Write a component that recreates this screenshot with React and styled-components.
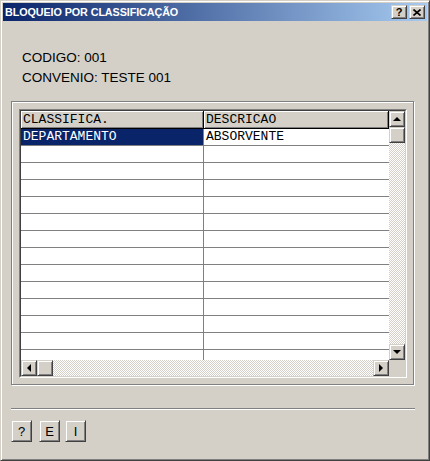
import React from 'react';
import styled, { createGlobalStyle, css } from 'styled-components';

const GlobalStyle = createGlobalStyle`
  body {
    margin: 0;
    background: #d4d0c8;
    font-family: "Liberation Sans", Arial, sans-serif;
  }
`;

// classic win2000 raised bevel
const raised = css`
  box-sizing: border-box;
  background: #d4d0c8;
  border: 1px solid;
  border-color: #d4d0c8 #404040 #404040 #d4d0c8;
  box-shadow: inset 1px 1px #fff, inset -1px -1px #808080;
`;

const Window = styled.div`
  box-sizing: border-box;
  width: 430px;
  height: 461px;
  padding: 2px;
  border: 1px solid;
  border-color: #d4d0c8 #404040 #404040 #d4d0c8;
  box-shadow: inset 1px 1px #fff, inset -1px -1px #808080;
  background: #d4d0c8;
  display: flex;
  flex-direction: column;
`;

const TitleBar = styled.div`
  height: 18px;
  display: flex;
  align-items: center;
  padding: 0 2px;
  background: linear-gradient(to right, #0a246a, #a6caf0);
`;

const Title = styled.div`
  flex: 1;
  color: #fff;
  font-weight: bold;
  font-size: 10.8px;
  letter-spacing: -0.1px;
`;

const TitleButton = styled.div`
  ${raised};
  width: 16px;
  height: 14px;
  margin-left: ${p => p.$gap || 0}px;
  display: flex;
  align-items: center;
  justify-content: center;
  font-weight: bold;
  font-size: 11px;
  color: #000;
  line-height: 1;
`;

const Body = styled.div`
  flex: 1;
  display: flex;
  flex-direction: column;
`;

const Labels = styled.div`
  margin-top: 27px;
  padding-left: 19px;
`;

const Label = styled.div`
  height: 20px;
  line-height: 20px;
  font-size: 13.5px;
  color: #000;
`;

const GroupBox = styled.div`
  box-sizing: border-box;
  margin: 13px 0 0 8px;
  width: 403px;
  height: 284px;
  padding: 7px 6px 6px 7px;
  border: 1px solid #808080;
  box-shadow: inset 1px 1px #fff, 1px 1px #fff;
`;

const GridFrame = styled.div`
  box-sizing: border-box;
  width: 388px;
  height: 269px;
  border: 1px solid;
  border-color: #808080 #fff #fff #808080;
`;

const GridInner = styled.div`
  box-sizing: border-box;
  height: 100%;
  border: 1px solid;
  border-color: #404040 #d4d0c8 #d4d0c8 #404040;
  display: grid;
  grid-template-columns: 1fr 16px;
  grid-template-rows: 1fr 16px;
`;

const DataArea = styled.div`
  background: #fff;
  overflow: hidden;
  font-family: "Liberation Mono", "Courier New", monospace;
  font-size: 13px;
`;

const Row = styled.div`
  display: flex;
  height: ${p => (p.$header ? 18 : 17)}px;
`;

const HeadCell = styled.div`
  box-sizing: border-box;
  ${p => (p.$w ? `width: ${p.$w}px;` : 'flex: 1;')}
  background: #d4d0c8;
  border-right: 1px solid #000;
  border-bottom: 1px solid #000;
  box-shadow: inset 1px 1px #fff, inset -1px -1px #808080;
  padding-left: 2px;
  line-height: 17px;
  color: #000;
  white-space: nowrap;
`;

const Cell = styled.div`
  box-sizing: border-box;
  ${p => (p.$w ? `width: ${p.$w}px;` : 'flex: 1;')}
  border-bottom: 1px solid #808080;
  border-right: ${p => (p.$w ? '1px solid #808080' : 'none')};
  background: ${p => (p.$selected ? '#0a246a' : '#fff')};
  color: ${p => (p.$selected ? '#fff' : '#000')};
  padding-left: 2px;
  line-height: 16px;
  white-space: nowrap;
`;

const ScrollV = styled.div`
  display: flex;
  flex-direction: column;
`;

const ScrollH = styled.div`
  display: flex;
`;

const Track = styled.div`
  flex: 1;
  background: repeating-conic-gradient(#d4d0c8 0% 25%, #fff 0% 50%) 0 0 / 2px 2px;
`;

const ScrollButton = styled.div`
  ${raised};
  width: 16px;
  height: 16px;
  flex: none;
  display: flex;
  align-items: center;
  justify-content: center;
`;

const Corner = styled.div`
  background: #d4d0c8;
`;

const Arrow = styled.div`
  width: 0;
  height: 0;
  ${p =>
    p.$dir === 'up'
      ? 'border-left: 4px solid transparent; border-right: 4px solid transparent; border-bottom: 4px solid #000;'
      : p.$dir === 'down'
      ? 'border-left: 4px solid transparent; border-right: 4px solid transparent; border-top: 4px solid #000;'
      : p.$dir === 'left'
      ? 'border-top: 4px solid transparent; border-bottom: 4px solid transparent; border-right: 4px solid #000;'
      : 'border-top: 4px solid transparent; border-bottom: 4px solid transparent; border-left: 4px solid #000;'}
`;

const Separator = styled.div`
  margin: 23px 0 0 8px;
  width: 404px;
  height: 0;
  border-top: 1px solid #808080;
  border-bottom: 1px solid #fff;
`;

const Buttons = styled.div`
  display: flex;
  margin: 10px 0 0 8px;
`;

const Button = styled.div`
  ${raised};
  width: 21px;
  height: 22px;
  margin-left: ${p => p.$gap || 0}px;
  display: flex;
  align-items: center;
  justify-content: center;
  font-size: 13px;
  color: #000;
`;

const rows = [['DEPARTAMENTO', 'ABSORVENTE']];
for (let i = 0; i < 13; i++) rows.push(['', '']);

export default function App() {
  return (
    <>
      <GlobalStyle />
      <Window>
        <TitleBar>
          <Title>BLOQUEIO POR CLASSIFICAÇÃO</Title>
          <TitleButton>?</TitleButton>
          <TitleButton $gap={2}>
            <svg width="8" height="7" viewBox="0 0 8 7">
              <path d="M0.5 0.5 L7.5 6.5 M7.5 0.5 L0.5 6.5" stroke="#000" strokeWidth="1.6" />
            </svg>
          </TitleButton>
        </TitleBar>
        <Body>
          <Labels>
            <Label>CODIGO: 001</Label>
            <Label>CONVENIO: TESTE 001</Label>
          </Labels>
          <GroupBox>
            <GridFrame>
              <GridInner>
                <DataArea>
                  <Row $header>
                    <HeadCell $w={183}>CLASSIFICA.</HeadCell>
                    <HeadCell>DESCRICAO</HeadCell>
                  </Row>
                  {rows.map((r, i) => (
                    <Row key={i}>
                      <Cell $w={183} $selected={i === 0}>{r[0]}</Cell>
                      <Cell>{r[1]}</Cell>
                    </Row>
                  ))}
                </DataArea>
                <ScrollV>
                  <ScrollButton><Arrow $dir="up" /></ScrollButton>
                  <ScrollButton />
                  <Track />
                  <ScrollButton><Arrow $dir="down" /></ScrollButton>
                </ScrollV>
                <ScrollH>
                  <ScrollButton><Arrow $dir="left" /></ScrollButton>
                  <ScrollButton />
                  <Track />
                  <ScrollButton><Arrow $dir="right" /></ScrollButton>
                </ScrollH>
                <Corner />
              </GridInner>
            </GridFrame>
          </GroupBox>
          <Separator />
          <Buttons>
            <Button>?</Button>
            <Button $gap={7}>E</Button>
            <Button $gap={5}>I</Button>
          </Buttons>
        </Body>
      </Window>
    </>
  );
}
